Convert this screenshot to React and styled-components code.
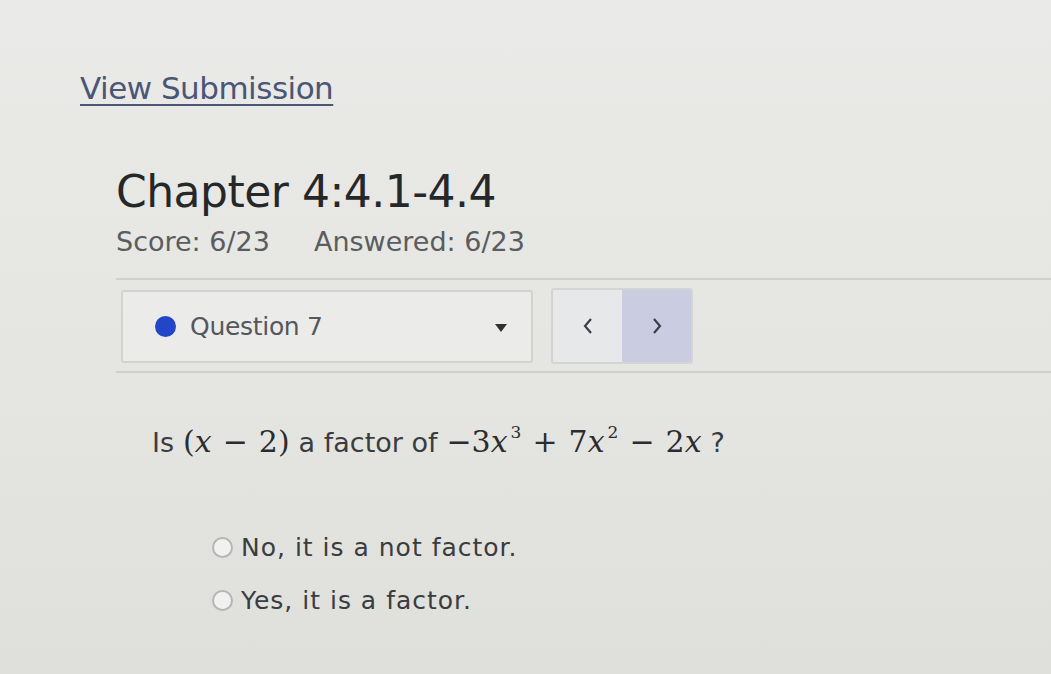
import React from "react";
import styled, { createGlobalStyle } from "styled-components";

const GlobalStyle = createGlobalStyle`
  html, body {
    margin: 0;
    padding: 0;
    background: #e4e5e1;
  }
`;

const Page = styled.div`
  width: 1051px;
  height: 674px;
  overflow: hidden;
  box-sizing: border-box;
  padding: 70px 0 0 80px;
  background: linear-gradient(180deg, #eaebe8 0%, #e5e6e2 55%, #dfe0dc 100%);
  font-family: "DejaVu Sans", Verdana, sans-serif;
`;

const BackLink = styled.a`
  display: inline-block;
  font-size: 31px;
  color: #4b5575;
  text-decoration: underline;
  text-decoration-thickness: 2px;
  text-underline-offset: 5px;
  letter-spacing: -0.5px;
  cursor: pointer;
`;

const Content = styled.div`
  margin-left: 36px;
  margin-top: 58px;
`;

const Title = styled.h1`
  margin: 0;
  font-size: 44px;
  font-weight: normal;
  color: #262729;
  letter-spacing: -0.5px;
  line-height: 56px;
`;

const Meta = styled.div`
  display: flex;
  gap: 44px;
  margin-top: 6px;
  font-size: 27px;
  color: #5a5c60;
  line-height: 32px;
`;

const Divider = styled.div`
  height: 2px;
  background: #cfd0cd;
  margin-right: -40px;
  margin-top: ${(p) => p.$top || 0}px;
`;

const Toolbar = styled.div`
  display: flex;
  align-items: center;
  gap: 18px;
  margin: 8px 0 7px 5px;
`;

const Select = styled.div`
  width: 412px;
  height: 73px;
  box-sizing: border-box;
  border: 2px solid #d2d3d0;
  border-radius: 3px;
  background: #ebecea;
  display: flex;
  align-items: center;
  padding: 0 20px 0 32px;
  font-size: 25px;
  letter-spacing: -0.3px;
  color: #54575c;
`;

const Dot = styled.span`
  width: 21px;
  height: 21px;
  border-radius: 50%;
  background: #2345c8;
  margin-right: 14px;
  flex: none;
`;

const Caret = styled.span`
  margin-left: auto;
  width: 0;
  height: 0;
  border-left: 6px solid transparent;
  border-right: 6px solid transparent;
  border-top: 8px solid #2f3135;
  margin-right: 4px;
  margin-top: 4px;
`;

const Nav = styled.div`
  display: flex;
  height: 72px;
  border: 2px solid #d4d5d2;
  border-radius: 3px;
  overflow: hidden;
`;

const NavButton = styled.button`
  width: 69px;
  border: none;
  background: ${(p) => (p.$active ? "#cacde2" : "#e6e8ea")};
  color: #3c3f4a;
  display: flex;
  align-items: center;
  justify-content: center;
  padding: 0;
`;

const Question = styled.p`
  margin: 51px 0 0 36px;
  font-size: 27px;
  color: #3a3c40;
  display: flex;
  align-items: baseline;
  gap: 9px;
  white-space: nowrap;
`;

const Math = styled.span`
  font-family: "DejaVu Serif", "Liberation Serif", serif;
  font-size: 30px;
  color: #2b2c30;
  white-space: nowrap;

  i {
    font-style: italic;
  }

  sup {
    font-size: 17px;
    vertical-align: 14px;
    line-height: 0;
    margin-left: 3px;
  }
`;

const Op = styled.span`
  margin: 0 11px;
`;

const Options = styled.div`
  margin: 75px 0 0 96px;
  display: flex;
  flex-direction: column;
  gap: 26px;
`;

const Option = styled.label`
  display: flex;
  align-items: center;
  gap: 8px;
  font-size: 25px;
  letter-spacing: 1px;
  color: #3a3c40;
  line-height: 27px;
`;

const Radio = styled.span`
  width: 17px;
  height: 17px;
  border-radius: 50%;
  border: 2px solid #b4b6b8;
  background: #f1f2f0;
  flex: none;
`;

const Chevron = ({ dir }) => (
  <svg width="12" height="20" viewBox="0 0 12 20">
    <polyline
      points={dir === "left" ? "9,3 3,10 9,17" : "3,3 9,10 3,17"}
      fill="none"
      stroke="#3c3f4a"
      strokeWidth="2.2"
    />
  </svg>
);

const App = () => {
  return (
    <>
      <GlobalStyle />
      <Page>
        <BackLink>View Submission</BackLink>
        <Content>
          <Title>Chapter 4:4.1-4.4</Title>
          <Meta>
            <span>Score: 6/23</span>
            <span>Answered: 6/23</span>
          </Meta>
          <Divider $top={20} />
          <Toolbar>
            <Select>
              <Dot />
              Question 7
              <Caret />
            </Select>
            <Nav>
              <NavButton>
                <Chevron dir="left" />
              </NavButton>
              <NavButton $active>
                <Chevron dir="right" />
              </NavButton>
            </Nav>
          </Toolbar>
          <Divider />
          <Question>
            <span>Is</span>
            <Math>
              (<i>x</i>
              <Op>−</Op>2)
            </Math>
            <span>a factor of</span>
            <Math>
              −3<i>x</i>
              <sup>3</sup>
              <Op>+</Op>7<i>x</i>
              <sup>2</sup>
              <Op>−</Op>2<i>x</i>
            </Math>
            <span>?</span>
          </Question>
          <Options>
            <Option>
              <Radio />
              No, it is a not factor.
            </Option>
            <Option>
              <Radio />
              Yes, it is a factor.
            </Option>
          </Options>
        </Content>
      </Page>
    </>
  );
};

export default App;
